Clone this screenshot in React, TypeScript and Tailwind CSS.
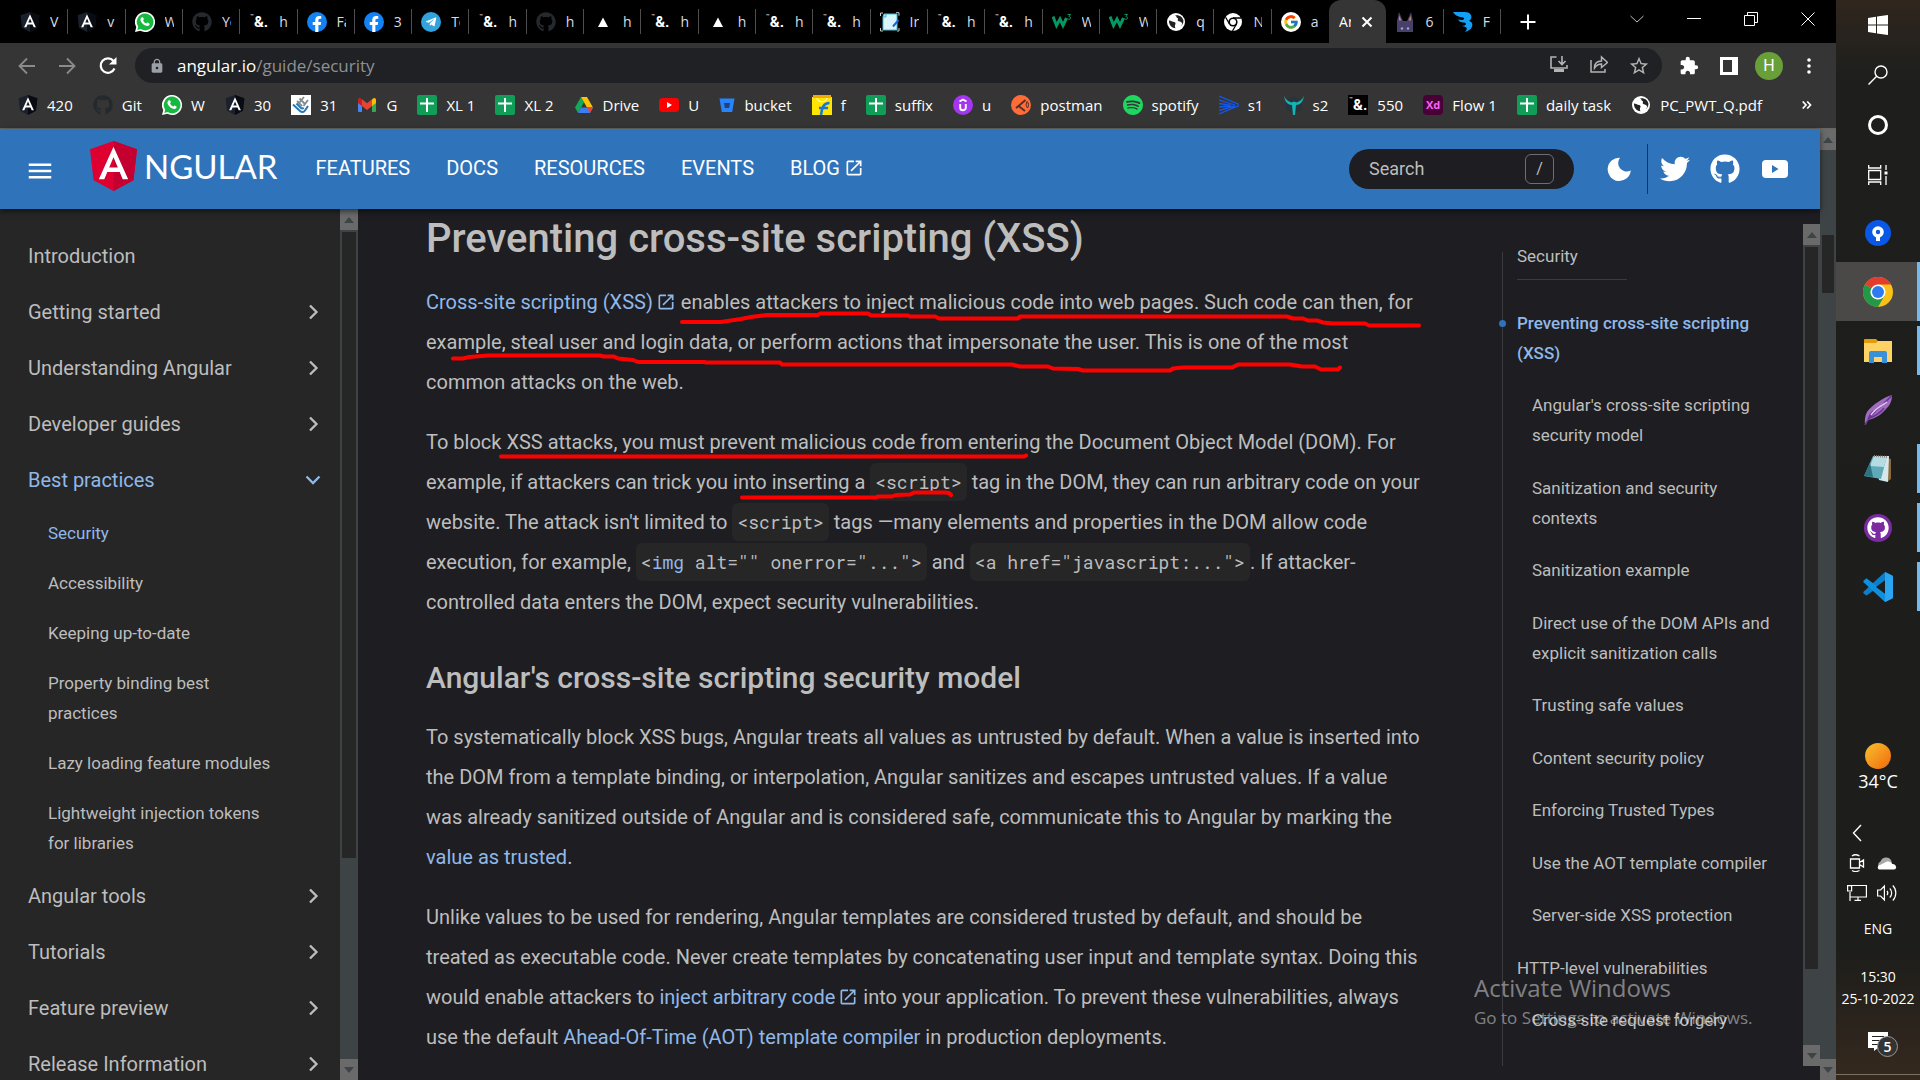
import React, { type ReactNode } from "react";
import { FaFacebookF, FaGithub, FaTwitter, FaTelegramPlane } from "react-icons/fa";
import { FcGoogle } from "react-icons/fc";
import { SiSpotify } from "react-icons/si";
import { MdExtension, MdLock, MdMenu, MdOpenInNew, MdStarBorder } from "react-icons/md";

const UI = "font-['Open_Sans',sans-serif]";

/* ---------- brand marks ---------- */

function AngularMark({ className = "size-5", dark = true }: { className?: string; dark?: boolean }) {
  return (
    <svg viewBox="0 0 250 266" className={className} aria-hidden="true">
      <path d="M125 0 0 44l19 165 106 57 106-57 19-165z" fill={dark ? "#1b212c" : "#dd0031"} />
      <path d="M125 0v266l106-57 19-165z" fill={dark ? "#080b12" : "#c3002f"} />
      <path
        d="M125 30 47 204h29l16-39h66l16 39h29zm23 111h-46l23-55z"
        fill="#fff"
        fillRule="evenodd"
      />
    </svg>
  );
}

function WhatsApp() {
  return (
    <svg viewBox="0 0 20 20" className="size-5" aria-hidden="true">
      <path d="M10 0a10 10 0 1 1-4.7 18.8L0 20l1.3-5A10 10 0 0 1 10 0z" fill="#fff" />
      <path d="M10 1.6a8.4 8.4 0 1 1-4.4 15.5L2.3 18l.9-3.3A8.4 8.4 0 0 1 10 1.600z" fill="#16b83f" />
      <path
        d="M6.900 5.300c.4-.3 1-.2 1.200.2l.7 1.600c.1.300 0 .6-.7 1.300.7 1.500 1.800 2.500 3.300 3.100.8-1 1-1 1.300-.9l1.700.9c.5.3.1 1.600-.5 2-1 .7-2.100.6-3.600 0-2-.8-3.600-2.400-4.500-4.200-.7-1.500-.3-3.200 1.100-4z"
        fill="#fff"
      />
    </svg>
  );
}

function GitHubDark() {
  return <FaGithub className="size-5 text-[#24292e]" aria-hidden="true" />;
}

function Ampersand({ boxed = false }: { boxed?: boolean }) {
  return (
    <span
      aria-hidden="true"
      className={
        boxed
          ? "flex size-5 items-center justify-center bg-black text-white"
          : "flex size-5 items-center justify-center text-white"
      }
    >
      <span className="self-start pt-px font-['Roboto',sans-serif] text-[6px] leading-[6px]">™</span>
      <span className="font-['Roboto',sans-serif] text-[15px] leading-5 font-bold">&amp;.</span>
    </span>
  );
}

function Facebook() {
  return (
    <span className="flex size-5 items-end justify-center rounded-full bg-[#1283f5]" aria-hidden="true">
      <FaFacebookF className="h-4 w-3 text-white" />
    </span>
  );
}

function Telegram() {
  return (
    <span className="flex size-5 items-center justify-center rounded-full bg-[#32a3dc]" aria-hidden="true">
      <FaTelegramPlane className="size-3 text-white" />
    </span>
  );
}

function Google() {
  return (
    <span className="flex size-5 items-center justify-center rounded-full bg-white" aria-hidden="true">
      <FcGoogle className="size-4" />
    </span>
  );
}

function Triangle() {
  return (
    <svg viewBox="0 0 20 20" className="size-5" aria-hidden="true">
      <path d="M10 5.500 15 15H5z" fill="#fff" />
    </svg>
  );
}

function NotepadFavicon() {
  return (
    <svg viewBox="0 0 20 20" className="size-5" aria-hidden="true">
      <path d="M.5 4V1H3M16 .7h3v3M.5 16v3H3M17 19h2v-3" fill="none" stroke="#c9c9c9" />
      <path d="M4 2h13v16H3V5z" fill="#d8f5fb" stroke="#49bcd4" />
      <path d="M3 5h3V2" fill="#8fdcea" stroke="#49bcd4" />
      <path d="M13 14.500 18.500 8" stroke="#1b62d6" strokeWidth="2" />
    </svg>
  );
}

function W3Mark() {
  return (
    <svg viewBox="0 0 20 20" className="size-5" aria-hidden="true">
      <path d="m1 4.500 3.500 9L8 7l3 6.500 3.500-7.500" fill="none" stroke="#059862" strokeWidth="3" />
      <path d="M15.500 2.500h3l-1.600 2c2.200 0 2.200 3-.1 2.800-.8 0-1.300-.4-1.500-.8" fill="none" stroke="#059862" />
    </svg>
  );
}

function Globe() {
  return (
    <svg viewBox="0 0 20 20" className="size-5" aria-hidden="true">
      <circle cx="10" cy="10" r="9" fill="#fff" />
      <path
        d="M3 8.500c2 0 3.500 1.500 5 1.600 1.500.2 2 1.400 1.200 2.600-.6 1-.2 2.300.3 3.600-4-.2-6.800-3.900-6.500-7.800zM9 3.500c2 .5 1 2 2.400 2.600 1.500.6-.4 2.200.8 2.900 1.200.5 2 .3 3 1.300.9.8 1.200 1.300.6 2.400-.5.800-1.300 1.300-2 1.900 2.500-1 4-3.600 3.600-6C16.800 5 13 2.600 9 3.500z"
        fill="#222"
      />
    </svg>
  );
}

function ChromeMono() {
  return (
    <svg viewBox="0 0 20 20" className="size-5" aria-hidden="true">
      <circle cx="10" cy="10" r="9" fill="#fff" />
      <circle cx="10" cy="10" r="4.600" fill="#000" />
      <circle cx="10" cy="10" r="3" fill="#fff" />
      <path d="M10 6h8M6.500 12 2.600 5.200M13.500 12l-4 7" stroke="#000" strokeWidth="1.300" />
    </svg>
  );
}

function CatFavicon() {
  return (
    <svg viewBox="0 0 20 20" className="size-5" aria-hidden="true">
      <path d="M2 20V9L4 0l4 9h4l4-9 2 9v11z" fill="#46406b" />
      <path d="M4.200 3.500 6.500 8.500H3.800zM15.800 3.500l-2.300 5h2.700z" fill="#b8866f" />
      <circle cx="7" cy="16.500" r="1.200" fill="#a9a1c6" />
      <circle cx="13" cy="16.500" r="1.200" fill="#a9a1c6" />
    </svg>
  );
}

function BlueBird() {
  return (
    <svg viewBox="0 0 20 20" className="size-5" aria-hidden="true">
      <path
        d="M0 0h12c5 0 7 3.500 6.300 6-.4 1.500-1.300 2.300-2.200 2.800 2.800 1 3.900 3.100 3 5.800-.9 2.900-4 4.800-7.600 5.400 1.500-1 2.500-2.300 2.200-3.700-.3-1.700-2.800-1.800-5.200-2.300 2.500-.2 4.400-.6 4.500-2 .1-1.300-2-1.300-3.300-1.500C7 10.200 6 9 5 7.500c2.500.6 5.300.8 6-.5.600-1-.5-1.700-2-1.800C5 4.800 2 3.500 0 0z"
        fill="#12a0f5"
      />
    </svg>
  );
}

function Sheets() {
  return (
    <svg viewBox="0 0 20 20" className="size-5" aria-hidden="true">
      <rect width="20" height="20" rx="2" fill="#0f9d58" />
      <path d="M10 3v14M3 8.500h14" stroke="#fff" strokeWidth="2" />
    </svg>
  );
}

function HandLogo() {
  return (
    <svg viewBox="0 0 20 20" className="size-5" aria-hidden="true">
      <path d="M0 0h20v20H0z" fill="#fff" />
      <path d="m6 6 5 5M8.500 3.500 14 9M13 2l-5 6M17 5l-4.500 6" fill="none" stroke="#85898c" strokeWidth="1.800" />
      <path d="m2 9.500 7 6.500c2 1.800 4 1 5-.500l3-4.500M5.500 8.500l4.500 4.500c1 .8 2 .5 2.500-.5" fill="none" stroke="#2878b5" strokeWidth="2" />
    </svg>
  );
}

function Gmail() {
  return (
    <svg viewBox="0 0 20 20" className="size-5" aria-hidden="true">
      <path d="M1 5v11a1 1 0 0 0 1 1h3V8z" fill="#4285f4" />
      <path d="M19 5v11a1 1 0 0 1-1 1h-3V8z" fill="#34a853" />
      <path d="M5 4.500V11L1 8V5c0-2 1.800-2.600 3-1.500z" fill="#c5221f" />
      <path d="m5 4.300 5 4 5-4V11l-5 4-5-4z" fill="#ea4335" />
      <path d="M15 4.500V11l4-3V5c0-2-1.800-2.600-3-1.500z" fill="#fbbc04" />
    </svg>
  );
}

function Drive() {
  return (
    <svg viewBox="0 0 20 20" className="size-5" aria-hidden="true">
      <path d="M7 2 1 12.500 4 18l6-10.500z" fill="#13a85c" />
      <path d="M7 2h6l6 10.500h-6z" fill="#ffc107" />
      <path d="M7 12.500h12L16 18H4z" fill="#3d7df0" />
      <path d="M13 12.500h6L16 18z" fill="#ea4335" />
    </svg>
  );
}

function YouTubeRed() {
  return (
    <svg viewBox="0 0 20 20" className="size-5" aria-hidden="true">
      <rect y="3" width="20" height="14" rx="3.500" fill="#f00" />
      <path d="m8 7 5 3-5 3z" fill="#fff" />
    </svg>
  );
}

function Bucket() {
  return (
    <svg viewBox="0 0 16 20" className="h-5 w-4" aria-hidden="true">
      <path d="M.5 3.500h15L13.200 17H2.800z" fill="#2684ff" />
      <path d="M5 8h6l-.9 5H5.900z" fill="#24416f" />
    </svg>
  );
}

function Flipkart() {
  return (
    <svg viewBox="0 0 20 20" className="size-5" aria-hidden="true">
      <path d="M0 2h20v18H0z" fill="#ffe500" />
      <path d="M1 0h18v3H1z" fill="#f3a900" />
      <path d="M5 3c0 5 10 5 10 0" fill="none" stroke="#fff" />
      <path d="M9 20c1-6 1.500-12 8.500-12M7 13h9" fill="none" stroke="#1c74d8" strokeWidth="2.600" />
    </svg>
  );
}

function Udemy() {
  return (
    <svg viewBox="0 0 20 20" className="size-5" aria-hidden="true">
      <circle cx="10" cy="10" r="10" fill="#a435f0" />
      <path d="m6.500 6.500 3.500-2 3.500 2M7.200 9v3.700c0 3.400 5.600 3.400 5.600 0V9" fill="none" stroke="#fff" strokeWidth="1.900" />
    </svg>
  );
}

function Postman() {
  return (
    <svg viewBox="0 0 20 20" className="size-5" aria-hidden="true">
      <circle cx="10" cy="10" r="10" fill="#ff6c37" />
      <path d="M14.500 5 7.500 11l6.500 5M7.500 11 5 13" fill="none" stroke="#4a3028" strokeWidth="1.800" />
      <path d="M16 6.500c2 1.500 2 4.500.5 6.500l-1.500-3z" fill="none" stroke="#4a3028" />
    </svg>
  );
}

function StripesLogo() {
  return (
    <svg viewBox="0 0 20 20" className="size-5" aria-hidden="true">
      <path
        d="m0 1 20 8.500M0 5l16 5M0 8.500l12 2M0 12l12-1M0 15.500 16 11M0 19l20-8.500"
        stroke="#1557e8"
        strokeWidth="1.300"
      />
    </svg>
  );
}

function PhoenixLogo() {
  return (
    <svg viewBox="0 0 20 20" className="size-5" aria-hidden="true">
      <path d="m10 1 8 4.500v9L10 19l-8-4.500v-9z" fill="#28333c" />
      <path d="M0 1c1 6 4 9 8 9l1 10h2l1-10c4 0 7-3 8-9-2 4-5 6-7.500 6.500L10 6.500 7.500 7.500C5 7 2 5 0 1z" fill="#11b5b5" />
    </svg>
  );
}

function AdobeXd() {
  return (
    <span
      aria-hidden="true"
      className="flex size-5 items-center justify-center rounded-sm bg-[#470137] font-['Open_Sans',sans-serif] text-[11px] leading-5 font-bold text-[#ff61f6]"
    >
      Xd
    </span>
  );
}

/* ---------- browser frame ---------- */

type Tab = { icon?: ReactNode; label: string; active?: boolean };

const tabs: Tab[] = [
  { icon: <AngularMark />, label: "V" },
  { icon: <AngularMark />, label: "v" },
  { icon: <WhatsApp />, label: "W" },
  { icon: <GitHubDark />, label: "Yo" },
  { icon: <Ampersand />, label: "h" },
  { icon: <Facebook />, label: "Fa" },
  { icon: <Facebook />, label: "3" },
  { icon: <Telegram />, label: "Te" },
  { icon: <Ampersand />, label: "h" },
  { icon: <GitHubDark />, label: "h" },
  { icon: <Triangle />, label: "h" },
  { icon: <Ampersand />, label: "h" },
  { icon: <Triangle />, label: "h" },
  { icon: <Ampersand />, label: "h" },
  { icon: <Ampersand />, label: "h" },
  { icon: <NotepadFavicon />, label: "Ir" },
  { icon: <Ampersand />, label: "h" },
  { icon: <Ampersand />, label: "h" },
  { icon: <W3Mark />, label: "W" },
  { icon: <W3Mark />, label: "W" },
  { icon: <Globe />, label: "q" },
  { icon: <ChromeMono />, label: "N" },
  { icon: <Google />, label: "a" },
  { label: "An", active: true },
  { icon: <CatFavicon />, label: "6" },
  { icon: <BlueBird />, label: "F" },
];

function TabStrip() {
  return (
    <div className={`flex h-[43px] shrink-0 items-stretch bg-black text-sm text-[#dadce0] ${UI}`}>
      <div role="tablist" className="ml-[11px] grid min-w-0 flex-1 grid-cols-26">
        {tabs.map((tab, i) =>
          tab.active ? (
            <button
              key={i}
              role="tab"
              aria-selected="true"
              className="flex items-center gap-2.5 rounded-t-xl bg-[#353535] pl-2.5 text-white"
            >
              <span className="w-3 overflow-hidden whitespace-nowrap">{tab.label}</span>
              <svg viewBox="0 0 12 12" className="size-3" aria-hidden="true">
                <path d="m1.500 1.500 9 9m0-9-9 9" stroke="#fff" strokeWidth="2" />
              </svg>
            </button>
          ) : (
            <button key={i} role="tab" aria-selected="false" className="flex items-center">
              <span className="flex flex-1 items-center gap-2.5 pl-[9px]">
                <span className="shrink-0">{tab.icon}</span>
                <span className="w-[9px] overflow-hidden text-left whitespace-nowrap">{tab.label}</span>
              </span>
              <span className={i === 22 ? "h-[25px] w-px" : "h-[25px] w-px bg-[#4d4d4d]"} />
            </button>
          ),
        )}
      </div>
      <button aria-label="New tab" className="flex w-[54px] items-center justify-center">
        <svg viewBox="0 0 16 16" className="size-4" aria-hidden="true">
          <path d="M8 .5v15M.5 8h15" stroke="#fff" strokeWidth="2" />
        </svg>
      </button>
      <div className="ml-[53px] flex w-[228px] pb-1.5">
        <button aria-label="Search tabs" className="flex flex-1 items-center justify-center">
          <svg viewBox="0 0 14 14" className="size-3.5" fill="none" stroke="#bbb" aria-hidden="true">
            <path d="m.5 4 6.500 6 6.500-6" />
          </svg>
        </button>
        <button aria-label="Minimize" className="flex flex-1 items-center justify-center">
          <span className="h-px w-3.5 bg-white" />
        </button>
        <button aria-label="Restore" className="flex flex-1 items-center justify-center">
          <svg viewBox="0 0 14 14" className="size-3.5" fill="none" stroke="#fff" aria-hidden="true">
            <path d="M.5 3.500h10v10H.5zM3.500 3V.5h10v10H11" />
          </svg>
        </button>
        <button aria-label="Close" className="flex flex-1 items-center justify-center">
          <svg viewBox="0 0 14 14" className="size-3.5" stroke="#fff" aria-hidden="true">
            <path d="m.5.5 13 13m0-13-13 13" />
          </svg>
        </button>
      </div>
    </div>
  );
}

function AddressBar() {
  return (
    <div className="flex h-[45px] shrink-0 items-center bg-[#353535] pr-[7px] pl-[7px]">
      <button aria-label="Back" className="flex w-10 justify-center text-[#8b8b8b]">
        <svg viewBox="0 0 18 18" className="size-[18px]" fill="none" stroke="currentColor" strokeWidth="1.800" aria-hidden="true">
          <path d="M17 9H1.500M9 1.500 1.500 9 9 16.500" />
        </svg>
      </button>
      <button aria-label="Forward" className="flex w-10 justify-center text-[#8b8b8b]">
        <svg viewBox="0 0 18 18" className="size-[18px]" fill="none" stroke="currentColor" strokeWidth="1.800" aria-hidden="true">
          <path d="M1 9h15.500M9 1.500 16.500 9 9 16.500" />
        </svg>
      </button>
      <button aria-label="Reload" className="flex w-[41px] justify-center text-white">
        <svg viewBox="0 0 18 18" className="size-[18px]" fill="none" stroke="currentColor" strokeWidth="2.200" aria-hidden="true">
          <path d="M15.500 11.500A7.200 7.200 0 1 1 14.500 4" />
          <path d="M17.500 0v7.500H10z" fill="currentColor" stroke="none" />
        </svg>
      </button>
      <div className="ml-[7px] flex h-[35px] min-w-0 flex-1 items-center rounded-full bg-[#202124] pr-[3px] pl-3.5">
        <MdLock className="size-4 text-[#9aa0a6]" aria-hidden="true" />
        <span className={`ml-3 flex-1 text-[17px] leading-6 text-[#8e9196] ${UI}`}>
          <span className="text-white">angular.io</span>/guide/security
        </span>
        <div className="flex text-[#b4b4b4]">
          <button aria-label="Install app" className="flex w-10 justify-center">
            <svg viewBox="0 0 18 18" className="size-[18px]" fill="none" stroke="currentColor" strokeWidth="1.600" aria-hidden="true">
              <path d="M6.500 2H1v11h16v-3M12 1v8M8.500 6 12 9.500 15.500 6" />
              <path d="M4 14h10v3H4z" fill="currentColor" stroke="none" />
            </svg>
          </button>
          <button aria-label="Share" className="flex w-10 justify-center">
            <svg viewBox="0 0 18 18" className="size-[18px]" fill="none" stroke="currentColor" strokeWidth="1.500" aria-hidden="true">
              <path d="M1 5v12h14v-3M4.500 13c0-5 3-7 7-7V2l6 5.500-6 5V9c-3 0-5 1-7 4z" />
            </svg>
          </button>
          <button aria-label="Bookmark this page" className="flex w-10 justify-center">
            <MdStarBorder className="size-[22px]" aria-hidden="true" />
          </button>
        </div>
      </div>
      <div className="ml-[7px] flex items-center text-white">
        <button aria-label="Extensions" className="flex w-10 justify-center">
          <MdExtension className="size-5" aria-hidden="true" />
        </button>
        <button aria-label="Side panel" className="flex w-10 justify-center">
          <svg viewBox="0 0 18 18" className="size-[18px]" aria-hidden="true">
            <path d="M1.500 1.500h15v15h-15z" fill="none" stroke="#fff" strokeWidth="3" />
            <path d="M12 2h5v14h-5z" fill="#fff" />
          </svg>
        </button>
        <button aria-label="Profile" className="flex w-10 justify-center">
          <span className="flex size-7 items-center justify-center rounded-full bg-[#689f38] font-['Roboto',sans-serif] text-base">
            H
          </span>
        </button>
        <button aria-label="Menu" className="flex w-10 justify-center">
          <svg viewBox="0 0 4 16" className="h-4 w-1" fill="#fff" aria-hidden="true">
            <circle cx="2" cy="2" r="1.800" />
            <circle cx="2" cy="8" r="1.800" />
            <circle cx="2" cy="14" r="1.800" />
          </svg>
        </button>
      </div>
    </div>
  );
}

const bookmarks: { icon: ReactNode; label: string }[] = [
  { icon: <AngularMark />, label: "420" },
  { icon: <GitHubDark />, label: "Git" },
  { icon: <WhatsApp />, label: "W" },
  { icon: <AngularMark />, label: "30" },
  { icon: <HandLogo />, label: "31" },
  { icon: <Gmail />, label: "G" },
  { icon: <Sheets />, label: "XL 1" },
  { icon: <Sheets />, label: "XL 2" },
  { icon: <Drive />, label: "Drive" },
  { icon: <YouTubeRed />, label: "U" },
  { icon: <Bucket />, label: "bucket" },
  { icon: <Flipkart />, label: "f" },
  { icon: <Sheets />, label: "suffix" },
  { icon: <Udemy />, label: "u" },
  { icon: <Postman />, label: "postman" },
  { icon: <SiSpotify className="size-5 text-[#1ed760]" />, label: "spotify" },
  { icon: <StripesLogo />, label: "s1" },
  { icon: <PhoenixLogo />, label: "s2" },
  { icon: <Ampersand boxed />, label: "550" },
  { icon: <AdobeXd />, label: "Flow 1" },
  { icon: <Sheets />, label: "daily task" },
  { icon: <Globe />, label: "PC_PWT_Q.pdf" },
];

function BookmarksBar() {
  return (
    <div className={`flex h-[41px] shrink-0 items-center border-b border-[#666] bg-[#353535] pr-6 pb-1.5 pl-[18px] text-[15px] leading-5 text-white ${UI}`}>
      <div className="mr-10 flex min-w-0 flex-1 justify-between">
        {bookmarks.map((b) => (
          <a key={b.label} href="#" className="flex items-center gap-[9px] whitespace-nowrap">
            {b.icon}
            {b.label}
          </a>
        ))}
      </div>
      <button aria-label="More bookmarks">
        <svg viewBox="0 0 10 8" className="h-2 w-2.5" fill="none" stroke="#fff" strokeWidth="1.700" aria-hidden="true">
          <path d="M.7.5 4 4 .7 7.500M5.200.5 8.500 4 5.200 7.500" />
        </svg>
      </button>
    </div>
  );
}

/* ---------- site header ---------- */

function SiteHeader() {
  return (
    <header className="relative z-10 flex h-20 shrink-0 items-center bg-[#2f74bb] pr-8 pl-[25px] text-white shadow-[0_2px_6px_rgba(0,0,0,0.6)]">
      <button aria-label="Docs menu" className="pt-1">
        <MdMenu className="size-[30px]" aria-hidden="true" />
      </button>
      <a href="#" aria-label="Angular home" className="ml-[35px] flex items-center gap-[7px] pb-1.5">
        <AngularMark className="h-[50px] w-[47px]" dark={false} />
        <span className="font-['Lato',sans-serif] text-[33px] leading-[50px]">NGULAR</span>
      </a>
      <nav aria-label="Main" className="ml-[38px] flex gap-9 pb-0.5 text-xl leading-6">
        <a href="#">FEATURES</a>
        <a href="#">DOCS</a>
        <a href="#">RESOURCES</a>
        <a href="#">EVENTS</a>
        <a href="#" className="flex items-center gap-1">
          BLOG <MdOpenInNew className="size-5" aria-hidden="true" />
        </a>
      </nav>
      <label className="ml-auto flex h-10 w-[225px] items-center rounded-full bg-[#1e1e22] pr-5 pl-5">
        <input
          type="search"
          aria-label="Search"
          placeholder="Search"
          className="min-w-0 flex-1 bg-transparent text-lg leading-6 text-[#bdbdbd] outline-none placeholder:text-[#bdbdbd]"
        />
        <kbd className="flex h-[30px] w-[29px] items-center justify-center rounded-md border border-[#6f6f73] font-['Roboto',sans-serif] text-base text-[#bdbdbd]">
          /
        </kbd>
      </label>
      <button aria-label="Dark theme" className="ml-[33px]">
        <svg viewBox="0 0 24 24" className="size-6" fill="#fff" aria-hidden="true">
          <path d="M13 .8A11.600 11.600 0 1 0 23.800 13.500 8.500 8.500 0 0 1 13 .8z" />
        </svg>
      </button>
      <span className="mr-3 ml-4 h-[50px] w-px bg-[#1e3350]" />
      <a href="#" aria-label="Twitter">
        <FaTwitter className="size-[30px]" aria-hidden="true" />
      </a>
      <a href="#" aria-label="GitHub" className="ml-5">
        <FaGithub className="size-[30px]" aria-hidden="true" />
      </a>
      <a href="#" aria-label="YouTube" className="ml-[22px]">
        <svg viewBox="0 0 26 18" className="h-[18px] w-[26px]" aria-hidden="true">
          <rect width="26" height="18" rx="4" fill="#fff" />
          <path d="m10 5 6.500 4L10 13z" fill="#2f74bb" />
        </svg>
      </a>
    </header>
  );
}

/* ---------- scrollbars ---------- */

function ArrowCell({ down = false }: { down?: boolean }) {
  return (
    <span className="flex h-[21px] w-full shrink-0 items-center justify-center bg-[#6a6a6a]">
      <svg viewBox="0 0 10 6" className="h-1.5 w-2.5" aria-hidden="true">
        <path d={down ? "M0 0h10L5 6z" : "M0 6h10L5 0z"} fill="#3e4446" />
      </svg>
    </span>
  );
}

function Scrollbar({ className, thumb }: { className: string; thumb: string }) {
  return (
    <div aria-hidden="true" className={`flex shrink-0 flex-col bg-[#3e4446] ${className}`}>
      <ArrowCell />
      <div className="min-h-0 flex-1 px-0.5">
        <div className={`bg-[#262626] ${thumb}`} />
      </div>
      <ArrowCell down />
    </div>
  );
}

/* ---------- left navigation ---------- */

function Chevron({ open = false }: { open?: boolean }) {
  return (
    <svg viewBox="0 0 16 16" className="size-4" fill="none" stroke="currentColor" strokeWidth="2.300" aria-hidden="true">
      <path d={open ? "m1.500 4.500 6.500 6.500 6.500-6.500" : "m5 1.500 6.500 6.500L5 14.500"} />
    </svg>
  );
}

function NavGroup({ label, open = false }: { label: string; open?: boolean }) {
  return (
    <button
      aria-expanded={open}
      className={
        open
          ? "flex h-14 w-full shrink-0 items-center justify-between pr-[19px] pl-7 text-[#90b8e8]"
          : "flex h-14 w-full shrink-0 items-center justify-between pr-[19px] pl-7"
      }
    >
      {label}
      <Chevron open={open} />
    </button>
  );
}

const guides = [
  "Security",
  "Accessibility",
  "Keeping up-to-date",
  "Property binding best practices",
  "Lazy loading feature modules",
  "Lightweight injection tokens for libraries",
];

function SideNav() {
  return (
    <nav
      aria-label="Guide"
      className="flex w-[340px] shrink-0 flex-col overflow-hidden bg-[#262626] pt-[19px] text-xl leading-6 text-[#bdbdbd]"
    >
      <a href="#" className="flex h-14 shrink-0 items-center pl-7">
        Introduction
      </a>
      <NavGroup label="Getting started" />
      <NavGroup label="Understanding Angular" />
      <NavGroup label="Developer guides" />
      <NavGroup label="Best practices" open />
      <ul className="shrink-0 text-[17px] leading-[30px]">
        {guides.map((g, i) => (
          <li key={g}>
            <a href="#" className={i === 0 ? "block py-2.5 pl-12 text-[#90b8e8]" : "block py-2.5 pr-16 pl-12"}>
              {g}
            </a>
          </li>
        ))}
      </ul>
      <NavGroup label="Angular tools" />
      <NavGroup label="Tutorials" />
      <NavGroup label="Feature preview" />
      <NavGroup label="Release Information" />
    </nav>
  );
}

/* ---------- article ---------- */

function Code({ children }: { children: ReactNode }) {
  return (
    <code className="rounded-md bg-[#262627] px-[5px] py-[7px] font-['Roboto_Mono','DejaVu_Sans_Mono',monospace] text-lg leading-5 whitespace-nowrap">
      {children}
    </code>
  );
}

function Link({ children, external = false }: { children: ReactNode; external?: boolean }) {
  return (
    <a href="#" className="text-[#90b8e8]">
      {children}
      {external && <MdOpenInNew className="ml-[3px] inline size-5 align-[-3px]" aria-hidden="true" />}
    </a>
  );
}

function Annotations() {
  return (
    <svg
      className="pointer-events-none absolute top-0 left-0 h-[400px] w-[1100px]"
      viewBox="358 209 1100 400"
      fill="none"
      stroke="#f00"
      strokeWidth="4"
      strokeLinecap="round"
      strokeLinejoin="round"
      aria-hidden="true"
    >
      <path d="M682 322H721L741 319 751 317 767 315H818L820 313.500H868L871 315.500H908L910 316.500H935L939 318.500H1018L1020 316.500H1287L1293 318.500H1303L1308 320.500H1317L1323 322.500 1333 323.500H1365L1369 325.500H1419" />
      <path d="M453 358.500H463L469 357 488 355.500H600L604 356.500H614L618 358.500 633 360 638 362H704L706 362.500H780L782 364.500H1012L1020 366.500H1048L1053 368.500 1078 369 1083 370.500H1170L1173 368.500 1183 367.500H1232L1238 364.500H1290L1302 366.500H1315L1321 369.500H1338L1340 367.500" />
      <path d="M501 456.500H1024L1026 455.500" />
      <path d="M742 497.500H876L878 496.500H892L896 495 910 494.500 914 492.500H945L949 493 951 495" />
    </svg>
  );
}

function Article() {
  return (
    <main className="relative min-w-0 flex-1 overflow-hidden">
      <article className="pr-[76px] pl-[68px] text-xl leading-10 text-[#bdbdbd] [&_p]:mb-5">
        <h2 className="mb-[13px] text-[40px] leading-[60px] font-medium">Preventing cross-site scripting (XSS)</h2>
        <p>
          <Link external>Cross-site scripting (XSS)</Link> enables attackers to inject malicious code into web pages. Such
          code can then, for example, steal user and login data, or perform actions that impersonate the user. This is one
          of the most common attacks on the web.
        </p>
        <p>
          To block XSS attacks, you must prevent malicious code from entering the Document Object Model (DOM). For example,
          if attackers can trick you into inserting a <Code>&lt;script&gt;</Code> tag in the DOM, they can run arbitrary
          code on your website. The attack isn't limited to <Code>&lt;script&gt;</Code> tags —many elements and properties
          in the DOM allow code execution, for example,{" "}
          <Code>
            &lt;<span className="text-[#90b8e8]">img</span> alt="" onerror="..."&gt;
          </Code>{" "}
          and <Code>&lt;a href="javascript:..."&gt;</Code>. If attacker-controlled data enters the DOM, expect security
          vulnerabilities.
        </p>
        <h3 className="mt-9 mb-[19px] text-[30px] leading-10 font-medium">Angular's cross-site scripting security model</h3>
        <p>
          To systematically block XSS bugs, Angular treats all values as untrusted by default. When a value is inserted into
          the DOM from a template binding, or interpolation, Angular sanitizes and escapes untrusted values. If a value was
          already sanitized outside of Angular and is considered safe, communicate this to Angular by marking the{" "}
          <Link>value as trusted</Link>.
        </p>
        <p>
          Unlike values to be used for rendering, Angular templates are considered trusted by default, and should be treated
          as executable code. Never create templates by concatenating user input and template syntax. Doing this would
          enable attackers to <Link external>inject arbitrary code</Link> into your application. To prevent these
          vulnerabilities, always use the default <Link>Ahead-Of-Time (AOT) template compiler</Link> in production
          deployments.
        </p>
      </article>
      <Annotations />
    </main>
  );
}

/* ---------- table of contents ---------- */

const toc: { label: string; level: 1 | 2; active?: boolean }[] = [
  { label: "Preventing cross-site scripting (XSS)", level: 1, active: true },
  { label: "Angular's cross-site scripting security model", level: 2 },
  { label: "Sanitization and security contexts", level: 2 },
  { label: "Sanitization example", level: 2 },
  { label: "Direct use of the DOM APIs and explicit sanitization calls", level: 2 },
  { label: "Trusting safe values", level: 2 },
  { label: "Content security policy", level: 2 },
  { label: "Enforcing Trusted Types", level: 2 },
  { label: "Use the AOT template compiler", level: 2 },
  { label: "Server-side XSS protection", level: 2 },
  { label: "HTTP-level vulnerabilities", level: 1 },
  { label: "Cross-site request forgery", level: 2 },
];

function Contents() {
  return (
    <aside className="mt-[15px] mb-3.5 flex w-[322px] shrink-0">
      <nav
        aria-label="Table of contents"
        className="mt-7 ml-1 min-w-0 flex-1 border-l border-[#3c3c40] pl-3.5 text-[17px] leading-[30px] text-[#bdbdbd]"
      >
        <div className="h-7 w-[110px] border-b border-[#3c3c40] leading-2">
          <a href="#">Security</a>
        </div>
        <ul className="mt-7 flex h-[727px] flex-col justify-between">
          {toc.map((t) => (
            <li key={t.label} className={t.level === 2 ? "pr-6 pl-[15px]" : "relative pr-6"}>
              {t.active && <span className="absolute top-3 -left-[18px] size-[7px] rounded-full bg-[#2f74bb]" />}
              <a href="#" className={t.active ? "font-medium text-[#90b8e8]" : ""}>
                {t.label}
              </a>
            </li>
          ))}
        </ul>
      </nav>
      <Scrollbar className="w-[17px]" thumb="mt-0.5 h-[722px]" />
    </aside>
  );
}

/* ---------- taskbar ---------- */

function TaskCell({ label, children, running, active }: { label: string; children: ReactNode; running?: boolean; active?: boolean }) {
  return (
    <button
      aria-label={label}
      className={
        active
          ? "relative flex h-[59px] w-full shrink-0 items-center justify-center bg-[#4a4947]"
          : "relative flex h-[59px] w-full shrink-0 items-center justify-center"
      }
    >
      {children}
      {running && (
        <span
          className={active ? "absolute inset-y-0 right-0 w-[3px] bg-[#76b9ed]" : "absolute inset-y-[5px] right-0 w-[3px] bg-[#76b9ed]"}
        />
      )}
    </button>
  );
}

function SystemCell({ label, children }: { label: string; children: ReactNode }) {
  return (
    <button aria-label={label} className="flex h-[50px] w-full shrink-0 items-center justify-center">
      {children}
    </button>
  );
}

function Taskbar() {
  return (
    <div
      className={`flex w-[84px] shrink-0 flex-col items-center bg-[linear-gradient(#30261d,#1e1f1d_7%,#1d1d1b_88%,#35291e)] text-[15px] leading-[22px] text-white ${UI}`}
    >
      <SystemCell label="Start">
        <svg viewBox="0 0 20 20" className="size-5" fill="#fff" aria-hidden="true">
          <path d="m0 3 8-1.200v7.700H0zM9 1.600 20 0v9.500H9zM0 10.500h8v7.700L0 17zM9 10.500h11V20L9 18.400z" />
        </svg>
      </SystemCell>
      <SystemCell label="Search">
        <svg viewBox="0 0 20 20" className="size-5" fill="none" stroke="#fff" strokeWidth="1.400" aria-hidden="true">
          <circle cx="13" cy="7" r="6" />
          <path d="M8.700 11.300.5 19.500" />
        </svg>
      </SystemCell>
      <SystemCell label="Cortana">
        <span className="size-5 rounded-full border-[3px] border-white" />
      </SystemCell>
      <SystemCell label="Task view">
        <svg viewBox="0 0 20 20" className="size-5" fill="none" stroke="#fff" strokeWidth="1.300" aria-hidden="true">
          <path d="M.7 5.500h12v9H.7zM.7 0v3h12V0M.7 20v-3h12v3M18 0v5M18 11v9" />
          <path d="M16.500 6.500h3v3h-3z" fill="#fff" stroke="none" />
        </svg>
      </SystemCell>
      <div className="mt-[3px] w-full">
        <TaskCell label="Sourcetree">
          <svg viewBox="0 0 26 26" className="size-[26px]" aria-hidden="true">
            <circle cx="13" cy="13" r="13" fill="#0a58e8" />
            <circle cx="13" cy="12" r="4" fill="none" stroke="#fff" strokeWidth="3.600" />
            <path d="M11 15h4v6h-4z" fill="#fff" />
          </svg>
        </TaskCell>
        <TaskCell label="Google Chrome" running active>
          <svg viewBox="0 0 30 30" className="size-[30px]" aria-hidden="true">
            <circle cx="15" cy="15" r="15" fill="#fbc116" />
            <path d="M15 15 2 7.500A15 15 0 0 1 28 7.500H15z" fill="#e33b2e" />
            <path d="M2 7.500A15 15 0 0 0 15 30l6.500-11.200L15 15z" fill="#259848" />
            <circle cx="15" cy="15" r="7.600" fill="#fff" />
            <circle cx="15" cy="15" r="6" fill="#2d7bf0" />
          </svg>
        </TaskCell>
        <TaskCell label="File Explorer" running>
          <svg viewBox="0 0 28 24" className="h-6 w-7" aria-hidden="true">
            <path d="M0 1a1 1 0 0 1 1-1h11l2 2v4H0z" fill="#e39b0c" />
            <path d="M0 4h12l2-2h14v21H0z" fill="#ffd265" />
            <path d="M5 24V14a2 2 0 0 1 2-2h14a2 2 0 0 1 2 2v10h-5v-6h-8v6z" fill="#3a91d8" />
          </svg>
        </TaskCell>
        <TaskCell label="Feather">
          <svg viewBox="0 0 28 30" className="h-[30px] w-7" aria-hidden="true">
            <path d="M28 0c-8 2-20 10-25 17-2 4-2.500 8-2 13 2-2 2-4 3-5 8-2 14-6 18-11 4-4 6-8 6-14z" fill="#a06cc0" />
            <path d="M28 0C20 10 8 16 1 30M9 16c-3 3-4 5-5 8M20 13c-3 4-9 8-14 10" fill="none" stroke="#6a3593" strokeWidth="1.500" />
            <path d="M23 7C17 11 11 14 7 20" fill="none" stroke="#dfc8ee" strokeWidth="1.500" />
          </svg>
        </TaskCell>
        <TaskCell label="Notepad" running>
          <svg viewBox="0 0 28 28" className="size-7" aria-hidden="true">
            <path d="m23 3 4 1v20l-4 3z" fill="#8a6a3c" />
            <path d="M11 1h14l-1 26-9-2z" fill="#d7e6ea" />
            <path d="M9 1h14l-6 23L0 21z" fill="#5fa9b8" />
            <path d="M10 1h13l-3 11-14-1z" fill="#b5dce2" />
            <path d="M0 21 6 8l3 14z" fill="#2c7281" />
            <path d="m10 1 14 1" stroke="#888" strokeWidth="2" strokeDasharray="1 1" />
          </svg>
        </TaskCell>
        <TaskCell label="GitHub Desktop" running>
          <span className="flex size-7 items-center justify-center rounded-full bg-[#7a2ba0]">
            <FaGithub className="size-[22px] text-white" aria-hidden="true" />
          </span>
        </TaskCell>
        <TaskCell label="Visual Studio Code" running>
          <svg viewBox="0 0 30 30" className="size-[30px]" aria-hidden="true">
            <path d="M22 0 .8 19.500a1.300 1.300 0 0 0 0 1.900l1.800 1.600c.5.500 1.200.5 1.800.100L30 4z" fill="#0b7fcc" />
            <path d="M22 30 .8 10.500a1.300 1.300 0 0 1 0-1.900L2.600 7c.5-.5 1.200-.5 1.800-.1L30 26z" fill="#0f8fde" />
            <path d="m22 8.200-9 6.800 9 6.800z" fill="#1d1d1b" />
            <path d="m22 0 6.800 3.200c.8.400 1.200 1 1.200 1.900v19.800c0 .9-.4 1.500-1.200 1.900L22 30z" fill="#2aa5f2" />
          </svg>
        </TaskCell>
      </div>
      <div className="mt-auto flex w-full flex-col items-center">
        <span className="size-[26px] rounded-full bg-linear-to-br from-[#f5c02c] to-[#f0660c]" />
        <span className="mt-px text-lg leading-[22px]">34°C</span>
        <div className="mt-[26px] mr-3 grid grid-cols-2 place-items-center">
          <button aria-label="Show hidden icons" className="flex size-[30px] items-center justify-center">
            <svg viewBox="0 0 10 18" className="h-[18px] w-2.5" fill="none" stroke="#fff" strokeWidth="1.400" aria-hidden="true">
              <path d="M9 1 1.500 9 9 17" />
            </svg>
          </button>
          <span />
          <button aria-label="Meet now" className="flex size-[30px] items-center justify-center">
            <svg viewBox="0 0 16 18" className="h-[18px] w-4" fill="none" stroke="#fff" strokeWidth="1.300" aria-hidden="true">
              <path d="M1.500 5h9v9h-9zM10.500 8.500 14.500 6v7l-4-2.500M3 2c2-1.500 5-1.500 7.500 0M3 16.500c2 1.300 5 1.300 7.500 0" />
            </svg>
          </button>
          <button aria-label="OneDrive" className="flex size-[30px] items-center justify-center">
            <svg viewBox="0 0 20 14" className="h-3.5 w-5" aria-hidden="true">
              <path d="M4 13a4 4 0 0 1-.5-7.500A6 6 0 0 1 14 4l3 9z" fill="#a9a9a9" />
              <path d="M3 13.500c-3 0-3-4 0-4.500l6-3c3-1 5 0 6 2 4-.5 6 5 2 5.500z" fill="#fff" />
            </svg>
          </button>
          <button aria-label="Network" className="flex size-[30px] items-center justify-center">
            <svg viewBox="0 0 20 18" className="h-[18px] w-5" fill="none" stroke="#fff" strokeWidth="1.200" aria-hidden="true">
              <path d="M5 1.500h14.400V13H3M3 8v9M.6 1.600h4V7h-4zM11 13v3M7.500 16.400H14" />
            </svg>
          </button>
          <button aria-label="Volume" className="flex size-[30px] items-center justify-center">
            <svg viewBox="0 0 20 18" className="h-[18px] w-5" fill="none" stroke="#fff" strokeWidth="1.200" aria-hidden="true">
              <path d="M.6 6h3L7.400 2v14L3.600 12h-3zM10 7c1 1.200 1 2.800 0 4M12.800 4.500c2.500 2.500 2.500 6.500 0 9M15.800 1.500c4 4 4 11 0 15" />
            </svg>
          </button>
        </div>
        <span className="mt-2.5 text-sm leading-[22px]">ENG</span>
        <span className="mt-[26px] text-sm leading-[22px]">15:30</span>
        <span className="text-sm leading-[22px] whitespace-nowrap">25-10-2022</span>
        <button aria-label="5 notifications" className="relative mt-4 mb-[17px] ml-2.5 h-[31px] w-[30px]">
          <svg viewBox="0 0 20 20" className="size-5" aria-hidden="true">
            <path d="M0 0h20v16H10l-4 3v-3H0z" fill="#fff" />
            <path d="M4 4.500h12M4 8.500h12M4 12.500h7" stroke="#222" strokeWidth="1.200" />
          </svg>
          <span className="absolute right-0 bottom-0 flex size-[21px] items-center justify-center rounded-full border border-[#9a9a9a] bg-[#333] text-sm leading-5 font-semibold">
            5
          </span>
        </button>
        <span className="mb-[5px] h-px w-full bg-[#7c7264]" />
      </div>
    </div>
  );
}

function ActivationNotice() {
  return (
    <div className={`pointer-events-none absolute right-[163px] bottom-12 z-20 w-[283px] whitespace-nowrap text-white/45 ${UI}`}>
      <p className="text-[24px] leading-8">Activate Windows</p>
      <p className="text-[17px] leading-7">Go to Settings to activate Windows.</p>
    </div>
  );
}

export default function App() {
  return (
    <div className="relative flex h-screen w-full overflow-hidden bg-[#1e1e22] font-['Roboto',sans-serif]">
      <div className="flex min-w-0 flex-1 flex-col">
        <TabStrip />
        <AddressBar />
        <BookmarksBar />
        <div className="flex min-h-0 flex-1">
          <div className="flex min-w-0 flex-1 flex-col">
            <SiteHeader />
            <div className="flex min-h-0 flex-1">
              <SideNav />
              <Scrollbar className="w-[18px]" thumb="mt-0.5 h-[626px]" />
              <Article />
              <Contents />
            </div>
          </div>
          <Scrollbar className="w-4" thumb="mt-[85px] h-[58px]" />
        </div>
      </div>
      <Taskbar />
      <ActivationNotice />
    </div>
  );
}
